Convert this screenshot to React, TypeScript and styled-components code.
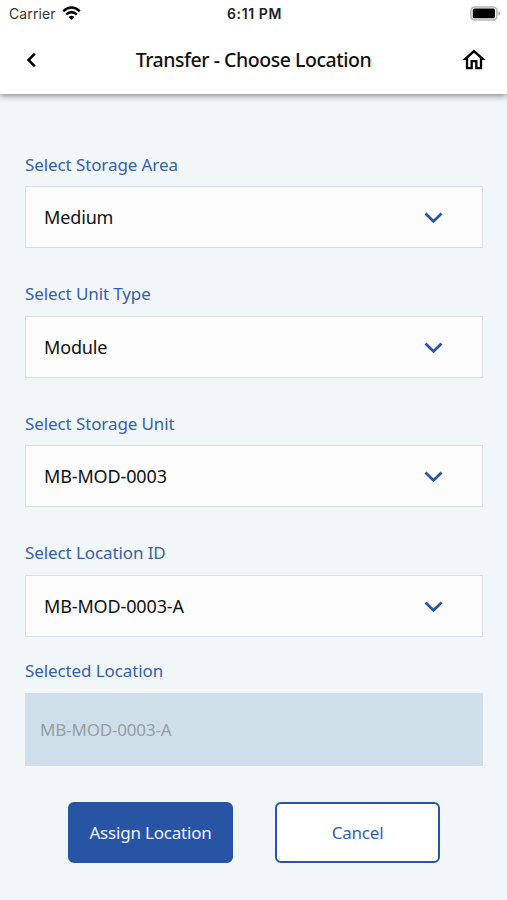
import React from "react";
import styled, { createGlobalStyle } from "styled-components";

const GlobalStyle = createGlobalStyle`
  *, *::before, *::after { box-sizing: border-box; }
  body { margin: 0; background: #f1f6f9; }
  button { font: inherit; margin: 0; padding: 0; border: 0; background: none; cursor: pointer; }
`;

const BLUE = "#2855a3";

const Screen = styled.div`
  display: flex;
  flex-direction: column;
  width: 100%;
  height: 900px;
  overflow: hidden;
  background: #f1f6f9;
  color: #111;
  font-family: "Noto Sans", "Open Sans", sans-serif;
`;

const Header = styled.header`
  height: 94px;
  background: #fff;
  box-shadow: 0 1px 7px rgba(0, 0, 0, 0.55);
`;

const StatusBar = styled.div`
  display: grid;
  grid-template-columns: 1fr auto 1fr;
  align-items: center;
  height: 27px;
  padding: 0 6px 0 9px;
  font-family: Inter, sans-serif;
  font-size: 14px;
  line-height: 27px;
`;

const Carrier = styled.div`
  display: flex;
  align-items: center;
  gap: 6px;
  color: #333;
  letter-spacing: 0.1px;
`;

const Time = styled.div`
  font-weight: 600;
  color: #222;
  letter-spacing: 0.6px;
  margin-right: 1px;
`;

const Battery = styled.svg`
  justify-self: end;
`;

const NavBar = styled.div`
  display: grid;
  grid-template-columns: 68px 1fr 68px;
  align-items: center;
  height: 65px;
`;

const IconButton = styled.button<{ $side: "left" | "right" }>`
  display: flex;
  justify-content: ${(p) => (p.$side === "left" ? "flex-start" : "flex-end")};
  padding-left: ${(p) => (p.$side === "left" ? "24px" : "0")};
  padding-right: ${(p) => (p.$side === "right" ? "19px" : "0")};
`;

const Title = styled.h1`
  margin: 0;
  text-align: center;
  font-size: 19.5px;
  font-weight: 500;
  line-height: 28px;
  letter-spacing: -0.46px;
  white-space: nowrap;
`;

const Form = styled.main`
  display: flex;
  flex-direction: column;
  padding: 58.9px 24px 0 25px;
`;

const Field = styled.div`
  display: flex;
  flex-direction: column;
  gap: 9.3px;
  margin-bottom: 34.2px;

  &:nth-child(4) { margin-bottom: 22.3px; }
  &:nth-child(5) { gap: 10px; margin-bottom: 36.1px; }
`;

const Label = styled.label`
  font-size: 17px;
  line-height: 24px;
  letter-spacing: -0.1px;
  color: #3560ad;
`;

const Select = styled.button`
  display: flex;
  align-items: center;
  justify-content: space-between;
  height: 62px;
  padding: 0 39px 0 18px;
  border: 1px solid #d9dee1;
  background: #fcfcfc;
  color: #111;
  font-size: 18px;
  letter-spacing: -0.14px;

  svg { margin-top: 2px; }
`;

const ReadOnly = styled.div`
  display: flex;
  align-items: center;
  height: 73px;
  padding-left: 15px;
  background: #cfdfe9;
  color: #959ea5;
  font-size: 17px;
  letter-spacing: -0.18px;
`;

const Actions = styled.div`
  display: flex;
  gap: 42px;
  padding-left: 43px;
`;

const ActionButton = styled.button<{ $primary?: boolean }>`
  width: 165px;
  height: 61px;
  border: 2px solid ${BLUE};
  border-radius: 6px;
  background: ${(p) => (p.$primary ? BLUE : "#fff")};
  color: ${(p) => (p.$primary ? "#edf3fc" : "#3560ad")};
  font-size: 17px;
  letter-spacing: -0.2px;
`;

const fields = [
  ["Select Storage Area", "Medium"],
  ["Select Unit Type", "Module"],
  ["Select Storage Unit", "MB-MOD-0003"],
  ["Select Location ID", "MB-MOD-0003-A"],
];

const Wifi = () => (
  <svg width="19" height="15" viewBox="0 0 19 15" fill="none" stroke="#000" strokeWidth="2.5">
    <path d="M1.2 5.2Q9.5-2.2 17.8 5.2" />
    <path d="M4.2 8.4Q9.5 3.9 14.8 8.4" />
    <path d="M6.6 11Q9.5 8.5 12.4 11L9.5 14Z" fill="#000" stroke="none" />
  </svg>
);

const Chevron = () => (
  <svg width="19" height="12" viewBox="0 0 19 12" fill="none" stroke={BLUE} strokeWidth="2.8">
    <path d="M1.5 1.5L9.5 9.4L17.5 1.5" />
  </svg>
);

export default function App() {
  return (
    <>
      <GlobalStyle />
      <Screen>
        <Header>
          <StatusBar>
            <Carrier>
              <span>Carrier</span>
              <Wifi />
            </Carrier>
            <Time>6:11 PM</Time>
            <Battery width="31" height="15" viewBox="0 0 31 15">
              <rect x="0.9" y="0.9" width="26" height="13" rx="3.6" fill="#fff" stroke="#b5b5b5" strokeWidth="1.5" />
              <rect x="2.8" y="2.6" width="22.2" height="9.6" rx="1.6" fill="#000" />
              <path d="M28.4 5Q30.3 5.9 30.3 7.4T28.4 9.8Z" fill="#aaa" />
            </Battery>
          </StatusBar>
          <NavBar>
            <IconButton $side="left" aria-label="Back">
              <svg width="14" height="16" viewBox="0 0 14 16" fill="none" stroke="#000" strokeWidth="2.5">
                <path d="M10.8 1.7L4.5 8L10.8 14.3" />
              </svg>
            </IconButton>
            <Title>Transfer - Choose Location</Title>
            <IconButton $side="right" aria-label="Home">
              <svg width="28" height="28" viewBox="0 0 24 24" fill="#000">
                <path d="M12 5.69l5 4.5V18h-2v-6H9v6H7v-7.81l5-4.5M12 3L2 12h3v8h6v-6h2v6h6v-8h3L12 3z" />
              </svg>
            </IconButton>
          </NavBar>
        </Header>
        <Form>
          {fields.map(([label, value]) => (
            <Field key={label}>
              <Label>{label}</Label>
              <Select>
                <span>{value}</span>
                <Chevron />
              </Select>
            </Field>
          ))}
          <Field>
            <Label>Selected Location</Label>
            <ReadOnly>MB-MOD-0003-A</ReadOnly>
          </Field>
          <Actions>
            <ActionButton $primary>Assign Location</ActionButton>
            <ActionButton>Cancel</ActionButton>
          </Actions>
        </Form>
      </Screen>
    </>
  );
}
